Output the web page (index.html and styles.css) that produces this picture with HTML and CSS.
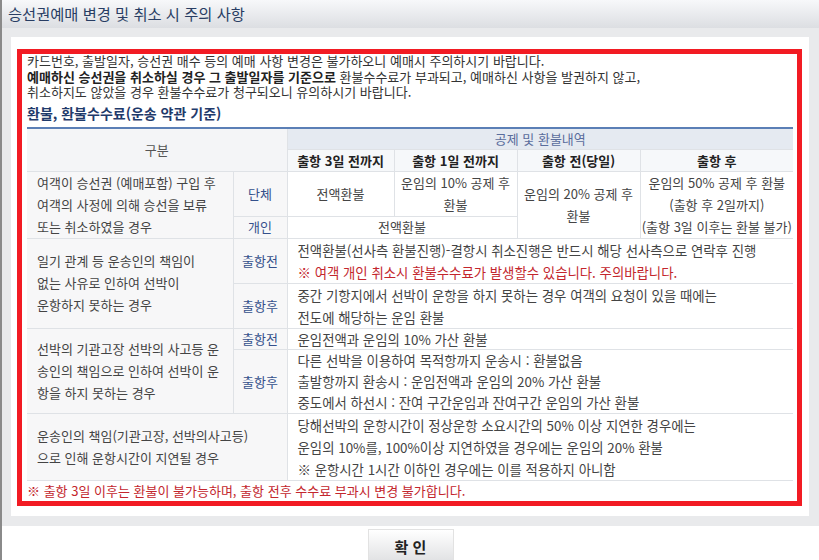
FILE: index.html
```html
<!DOCTYPE html>
<html lang="ko">
<head>
<meta charset="utf-8">
<title>승선권예매 변경 및 취소 시 주의 사항</title>
<link rel="stylesheet" href="styles.css">
</head>
<body>
<div class="win">
  <div class="titlebar">승선권예매 변경 및 취소 시 주의 사항</div>
  <div class="frame">
    <div class="panel">
      <div class="notice">
        <p class="intro">카드번호, 출발일자, 승선권 매수 등의 예매 사항 변경은 불가하오니 예매시 주의하시기 바랍니다.<br><b>예매하신 승선권을 취소하실 경우 그 출발일자를 기준으로</b> 환불수수료가 부과되고, 예매하신 사항을 발권하지 않고,<br>취소하지도 않았을 경우 환불수수료가 청구되오니 유의하시기 바랍니다.</p>
        <h2 class="heading">환불, 환불수수료(운송 약관 기준)</h2>
        <table class="refund">
          <colgroup>
            <col class="c1"><col class="c2"><col class="c3"><col class="c4"><col class="c5"><col class="c6">
          </colgroup>
          <thead>
            <tr class="hr1">
              <th class="gubun" colspan="2" rowspan="2">구분</th>
              <th class="group" colspan="4">공제 및 환불내역</th>
            </tr>
            <tr class="hr2">
              <th>출항 3일 전까지</th>
              <th>출항 1일 전까지</th>
              <th>출항 전(당일)</th>
              <th>출항 후</th>
            </tr>
          </thead>
          <tbody>
            <tr>
              <td class="case" rowspan="2">여객이 승선권 (예매포함) 구입 후<br>여객의 사정에 의해 승선을 보류<br>또는 취소하였을 경우</td>
              <td class="kind">단체</td>
              <td class="ctr">전액환불</td>
              <td class="ctr">운임의 10% 공제 후<br>환불</td>
              <td class="ctr" rowspan="2">운임의 20% 공제 후<br>환불</td>
              <td class="ctr" rowspan="2">운임의 50% 공제 후 환불<br>(출항 후 2일까지)<br>(출항 3일 이후는 환불 불가)</td>
            </tr>
            <tr class="one">
              <td class="kind">개인</td>
              <td class="ctr" colspan="2">전액환불</td>
            </tr>
            <tr>
              <td class="case" rowspan="2">일기 관계 등 운송인의 책임이<br>없는 사유로 인하여 선박이<br>운항하지 못하는 경우</td>
              <td class="kind">출항전</td>
              <td class="txt" colspan="4">전액환불(선사측 환불진행)-결항시 취소진행은 반드시 해당 선사측으로 연락후 진행<br><span class="warn">※ 여객 개인 취소시 환불수수료가 발생할수 있습니다. 주의바랍니다.</span></td>
            </tr>
            <tr>
              <td class="kind">출항후</td>
              <td class="txt" colspan="4">중간 기항지에서 선박이 운항을 하지 못하는 경우 여객의 요청이 있을 때에는<br>전도에 해당하는 운임 환불</td>
            </tr>
            <tr class="one">
              <td class="case" rowspan="2">선박의 기관고장 선박의 사고등 운<br>송인의 책임으로 인하여 선박이 운<br>항을 하지 못하는 경우</td>
              <td class="kind">출항전</td>
              <td class="txt" colspan="4">운임전액과 운임의 10% 가산 환불</td>
            </tr>
            <tr class="tight">
              <td class="kind">출항후</td>
              <td class="txt" colspan="4">다른 선박을 이용하여 목적항까지 운송시 : 환불없음<br>출발항까지 환송시 : 운임전액과 운임의 20% 가산 환불<br>중도에서 하선시 : 잔여 구간운임과 잔여구간 운임의 가산 환불</td>
            </tr>
            <tr>
              <td class="case" colspan="2">운송인의 책임(기관고장, 선박의사고등)<br>으로 인해 운항시간이 지연될 경우</td>
              <td class="txt" colspan="4">당해선박의 운항시간이 정상운항 소요시간의 50% 이상 지연한 경우에는<br>운임의 10%를, 100%이상 지연하였을 경우에는 운임의 20% 환불<br>※ 운항시간 1시간 이하인 경우에는 이를 적용하지 아니함</td>
            </tr>
          </tbody>
        </table>
        <p class="note">※ 출항 3일 이후는 환불이 불가능하며, 출항 전후 수수료 부과시 변경 불가합니다.</p>
      </div>
    </div>
  </div>
  <div class="footer">
    <button class="btn" type="button">확 인</button>
  </div>
</div>
</body>
</html>
```

FILE: styles.css
```css
html, body {
  margin: 0;
  padding: 0;
  background: #ffffff;
}

body {
  font-family: "Noto Sans CJK KR", "Noto Sans", sans-serif;
  color: #333333;
}

.win {
  border-left: 2px solid #8a8a8a;
  height: 560px;
  overflow: hidden;
  background: #ffffff;
}

.titlebar {
  height: 28px;
  line-height: 27px;
  padding-left: 6px;
  font-size: 15.3px;
  color: #283d63;
  background: linear-gradient(#f7f8fa, #dcdee2);
}

.frame {
  background: #e9eaec;
  padding: 9px 10px 10px 9px;
}

.panel {
  background: #ffffff;
  padding: 12px 7px 10px 6px;
}

.notice {
  border: 5px solid #f21b23;
  padding: 0 3px 0 5px;
}

.intro {
  margin: -1px 0 0;
  font-size: 13px;
  line-height: 15.5px;
  color: #333333;
}

.intro b {
  color: #222222;
}

.heading {
  margin: 4px 0 5px;
  font-size: 14px;
  line-height: 18px;
  font-weight: bold;
  color: #1f3a6b;
}

.refund {
  width: 766px;
  table-layout: fixed;
  border-collapse: collapse;
  border-top: 2px solid #5b7fb6;
  font-size: 13px;
  color: #444444;
}

.c1 { width: 206px; }
.c2 { width: 54px; }
.c3 { width: 107px; }
.c4 { width: 123px; }
.c5 { width: 123px; }
.c6 { width: 153px; }

.refund th,
.refund td {
  border: 1px solid #dfe2e6;
  padding: 0;
  line-height: 22px;
  white-space: nowrap;
}

.refund .one > td {
  line-height: 20px;
}

.refund .one > td.case {
  line-height: 22px;
}

.refund .tight > td {
  line-height: 21.3px;
}

.refund tr > :first-child {
  border-left: none;
}

.refund tr > :last-child {
  border-right: none;
}

.refund th {
  font-weight: bold;
  font-size: 13px;
  color: #222222;
  background: #f6f8fa;
}

.refund .hr1 th {
  line-height: 20px;
}

.refund .hr2 th {
  line-height: 21px;
}

.refund .gubun {
  font-weight: normal;
  font-size: 13px;
  color: #555555;
  background: #f4f5f7;
}

.refund .group {
  font-weight: normal;
  font-size: 13px;
  color: #5a6d9c;
  background: #e5eaf1;
}

.case {
  background: #f7f7f8;
  padding-left: 10px !important;
  text-align: left;
}

.kind {
  background: #f7f7f8;
  text-align: center;
  color: #34508b;
}

.ctr {
  text-align: center;
  background: #ffffff;
}

.txt {
  padding-left: 10px !important;
  text-align: left;
  font-size: 13.4px;
  background: #ffffff;
}

.warn {
  color: #c3262d;
}

.note {
  margin: 0;
  font-size: 13px;
  line-height: 20px;
  color: #c3262d;
}

.footer {
  display: flex;
  justify-content: center;
  padding-top: 3px;
  background: #ffffff;
}

.btn {
  width: 86px;
  height: 36px;
  border: 1px solid #e2e2e2;
  border-radius: 0;
  background: linear-gradient(#ffffff, #dedfe1);
  font-family: "Noto Sans CJK KR", sans-serif;
  font-size: 15px;
  line-height: 34px;
  font-weight: bold;
  color: #222222;
  padding: 0;
}
```
